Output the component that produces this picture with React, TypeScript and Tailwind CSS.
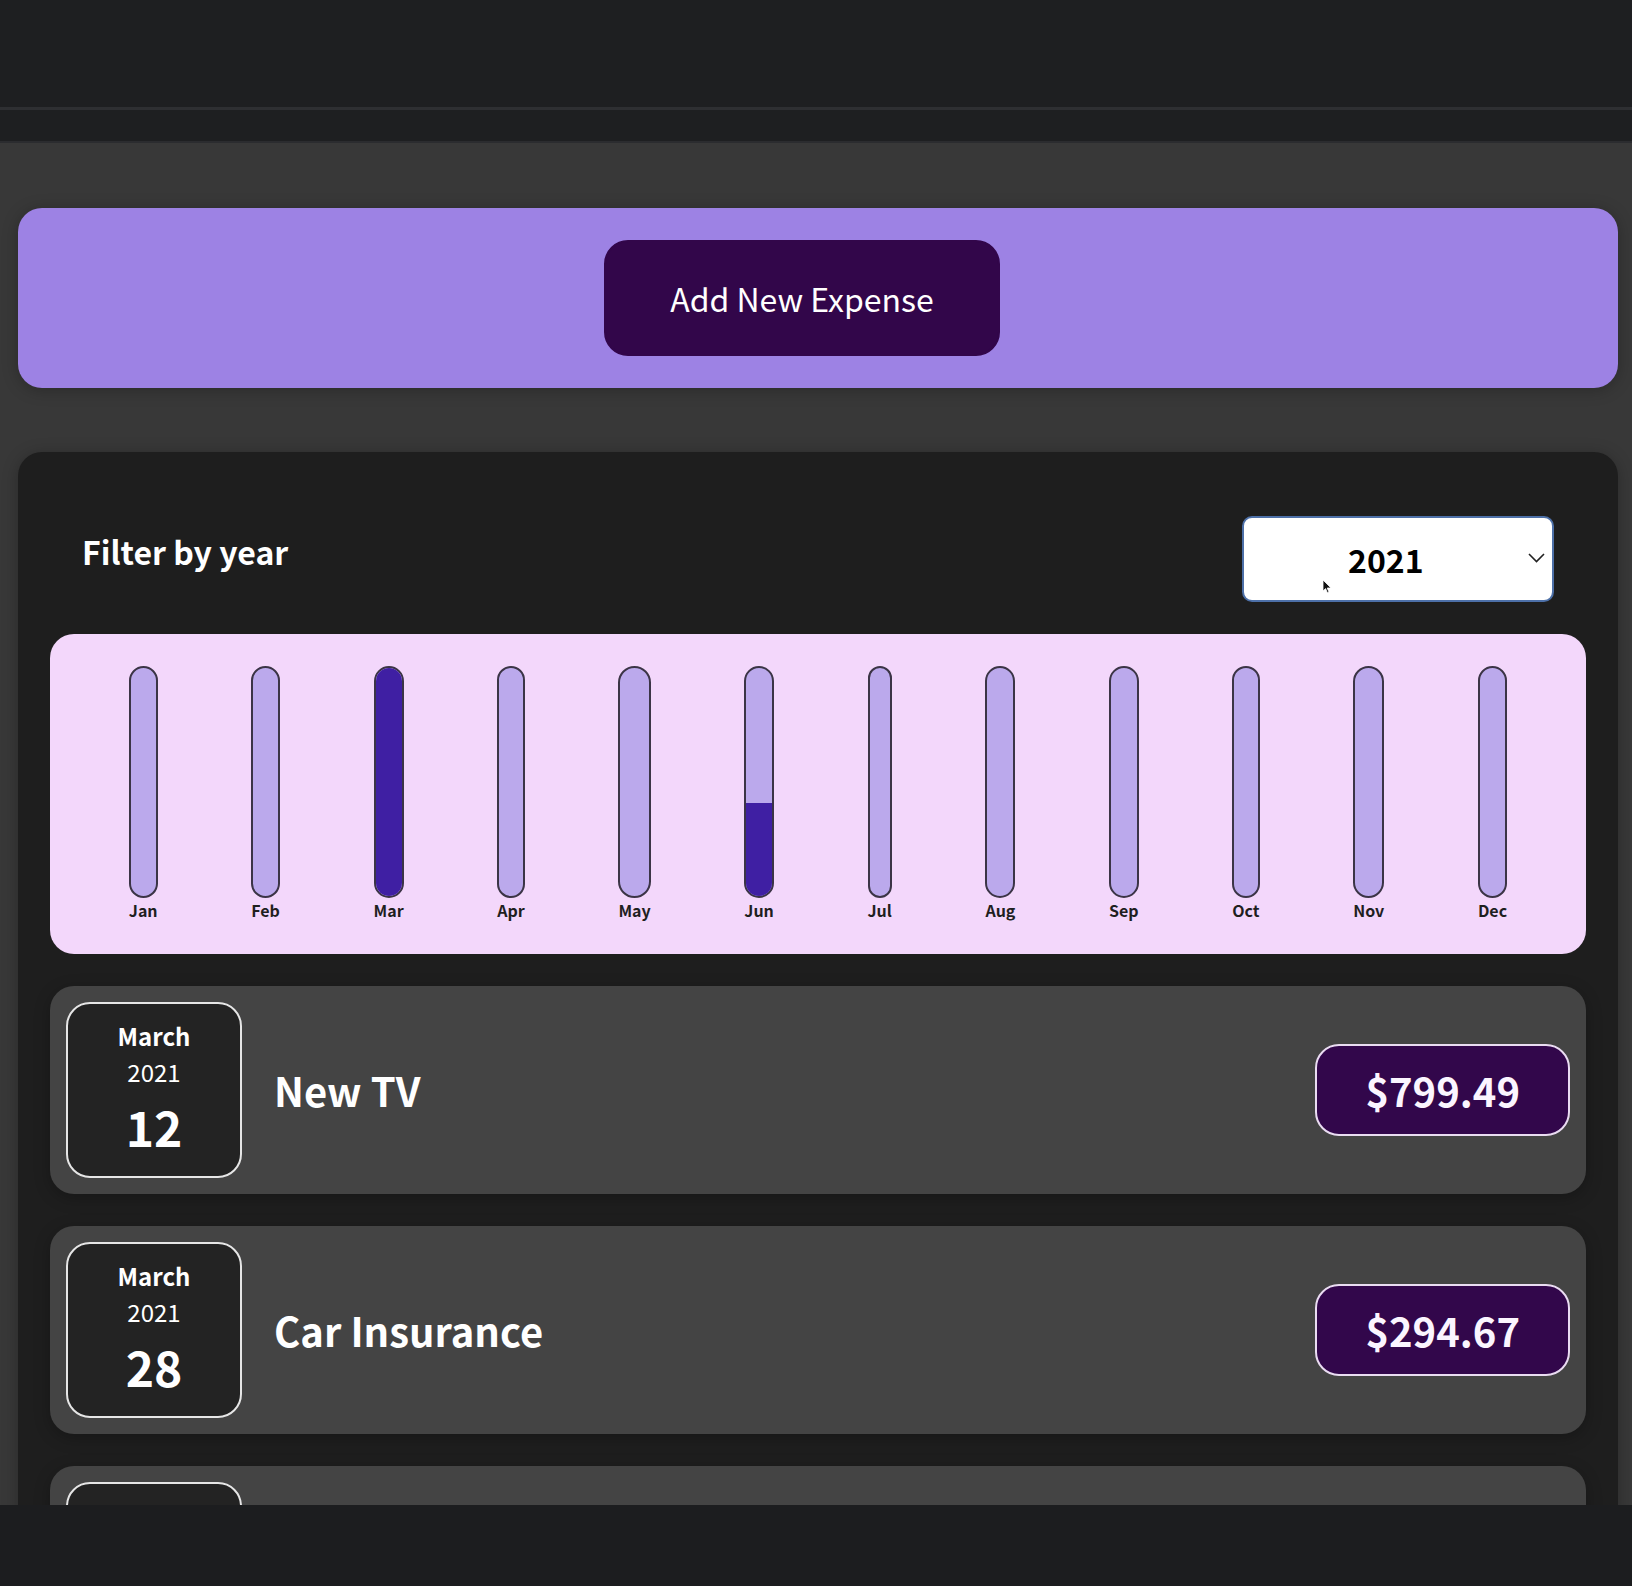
import React from 'react';

const months = [
  { label: 'Jan', fill: 0 },
  { label: 'Feb', fill: 0 },
  { label: 'Mar', fill: 100 },
  { label: 'Apr', fill: 0 },
  { label: 'May', fill: 0 },
  { label: 'Jun', fill: 41 },
  { label: 'Jul', fill: 0 },
  { label: 'Aug', fill: 0 },
  { label: 'Sep', fill: 0 },
  { label: 'Oct', fill: 0 },
  { label: 'Nov', fill: 0 },
  { label: 'Dec', fill: 0 },
];

const expenses = [
  { month: 'March', year: '2021', day: '12', title: 'New TV', amount: '$799.49' },
  { month: 'March', year: '2021', day: '28', title: 'Car Insurance', amount: '$294.67' },
  { month: 'June', year: '2021', day: '12', title: 'New Desk (Wooden)', amount: '$450.00' },
];

function ChartBar({ label, fill }: { label: string; fill: number }) {
  return (
    <div className="h-full flex flex-col items-center">
      <div className="h-full w-full border-2 border-[#3b3446] rounded-full bg-[#bba9ec] overflow-hidden flex flex-col justify-end">
        <div className="w-full bg-[#3f1fa3]" style={{ height: `${fill}%` }} />
      </div>
      <div className="text-[16px] font-bold leading-6 text-[#1f1f1f]">{label}</div>
    </div>
  );
}

function ExpenseItem({ month, year, day, title, amount }: (typeof expenses)[number]) {
  return (
    <div className="flex items-center p-4 my-8 rounded-[24px] bg-[#444444] shadow-[0_4px_16px_rgba(0,0,0,0.25)]">
      <div className="w-[176px] h-[176px] shrink-0 flex flex-col items-center justify-center rounded-[24px] border-2 border-[#e6e6e6] bg-[#232323] text-white">
        <div className="text-[24px] font-bold leading-9">{month}</div>
        <div className="text-[24px] leading-9">{year}</div>
        <div className="text-[48px] font-bold leading-[72px]">{day}</div>
      </div>
      <h2 className="flex-1 mx-8 text-[40px] font-bold text-white">{title}</h2>
      <div className="px-12 py-4 rounded-[24px] border-2 border-[#eadcf2] bg-[#32074b] text-[40px] leading-[1.4] font-bold text-[#fbf5ff]">
        {amount}
      </div>
    </div>
  );
}

export default function App() {
  return (
    <div className="w-[1632px] h-[1586px] bg-[#1c1d1f] flex flex-col overflow-hidden font-['Noto_Sans_CJK_JP','Noto_Sans',sans-serif]">
      {/* browser chrome strip */}
      <div className="h-[107px] shrink-0 bg-[#1e1f21]" />
      <div className="h-[3px] shrink-0 bg-[#2e2f32]" />
      <div className="h-[33px] shrink-0 bg-[#1e1f21] border-b-2 border-[#2b2c2f]" />

      <main className="h-[1362px] shrink-0 overflow-hidden bg-[#383838] pt-[65px]">
        {/* New expense */}
        <div className="ml-[18px] w-[1600px] p-8 rounded-[24px] bg-[#9d82e4] text-center shadow-[0_2px_16px_rgba(0,0,0,0.25)]">
          <button className="mr-8 px-16 py-8 rounded-[24px] border-2 border-[#32064a] bg-[#32064a] text-[32px] leading-[48px] text-white">
            Add New Expense
          </button>
        </div>

        {/* Expenses */}
        <div className="ml-[18px] mt-16 w-[1600px] p-8 rounded-[24px] bg-[#1e1e1e] shadow-[0_2px_16px_rgba(0,0,0,0.25)]">
          <div className="px-8 text-white">
            <div className="my-8 flex items-center justify-between">
              <label className="mb-4 text-[32px] font-bold leading-[48px]">Filter by year</label>
              <div className="relative w-[312px] h-[86px] rounded-[10px] border-2 border-[#4d70a8] bg-white flex items-center pl-[104px] text-black">
                <span className="text-[32px] font-bold leading-[48px]">2021</span>
                <svg className="absolute right-[7px] top-[35px] w-[17px] h-[10px]" viewBox="0 0 17 10" fill="none">
                  <path d="M1 1l7.5 7.5L16 1" stroke="#222" strokeWidth="1.6" />
                </svg>
                <svg className="absolute left-[78px] top-[61px] w-[10px] h-[15px]" viewBox="0 0 10 15">
                  <path d="M1 1v11l2.6-2.4 1.8 4.2 1.6-.7-1.8-4.1H9z" fill="#111" stroke="#fff" strokeWidth="0.8" />
                </svg>
              </div>
            </div>
          </div>

          <div className="h-[320px] p-8 rounded-[24px] bg-[#f3d7fb] flex justify-around">
            {months.map((m) => (
              <ChartBar key={m.label} label={m.label} fill={m.fill} />
            ))}
          </div>

          {expenses.map((e) => (
            <ExpenseItem key={e.title} {...e} />
          ))}
        </div>
      </main>
    </div>
  );
}
